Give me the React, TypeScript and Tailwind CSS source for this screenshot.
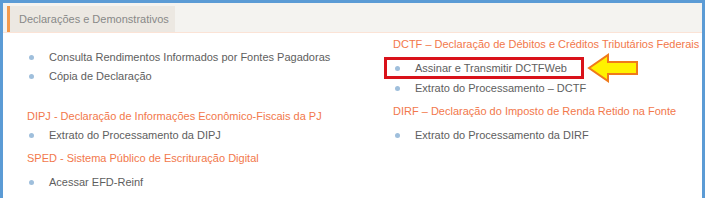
import React from "react";

const Bullet = () => (
  <span className="inline-block w-[5px] h-[5px] rounded-full bg-[#9fbfdc] mr-[15px] ml-[2px]" />
);

const Item = ({ children }: { children: React.ReactNode }) => (
  <div className="flex items-center h-[19px] text-[#5e5e5e] whitespace-nowrap">
    <Bullet />
    <span>{children}</span>
  </div>
);

const Heading = ({ children }: { children: React.ReactNode }) => (
  <div className="h-[19px] flex items-center text-[#f2784b] whitespace-nowrap">{children}</div>
);

export default function App() {
  return (
    <div
      className="w-[705px] h-[204px] bg-white overflow-hidden"
      style={{ fontFamily: '"Liberation Sans", Arial, sans-serif' }}
    >
      <div className="w-[705px] h-[198px] border-[3px] border-[#5b9bd5] border-b-0 bg-white flex flex-col overflow-hidden">
        <div className="h-[30px] bg-[#f4f3f0] border-b border-[#fbe3d6] flex items-end pl-[4px]">
          <div className="h-[26px] w-[168px] bg-[#ece8e2] border-l-[3px] border-[#f39a4c] flex items-center pl-[9px] text-[11px] text-[#888]">
            Declarações e Demonstrativos
          </div>
        </div>
        <div className="flex text-[11px] flex-1">
          <div className="w-[368px] shrink-0 pl-[24px] pt-[15px] flex flex-col">
            <Item>Consulta Rendimentos Informados por Fontes Pagadoras</Item>
            <Item>Cópia de Declaração</Item>
            <div className="h-[21px]" />
            <Heading>DIPJ - Declaração de Informações Econômico-Fiscais da PJ</Heading>
            <Item>Extrato do Processamento da DIPJ</Item>
            <div className="h-[4px]" />
            <Heading>SPED - Sistema Público de Escrituração Digital</Heading>
            <div className="h-[5px]" />
            <Item>Acessar EFD-Reinf</Item>
          </div>
          <div className="flex-1 pl-[22px] pt-[2px] flex flex-col">
            <Heading>DCTF – Declaração de Débitos e Créditos Tributários Federais</Heading>
            <div className="flex items-end h-[25px]">
              <div className="border-[3px] border-[#d9121a] w-[200px] h-[22px] flex items-center -ml-[9px] pl-[6px] shrink-0">
                <Item>Assinar e Transmitir DCTFWeb</Item>
              </div>
              <svg width="54" height="30" viewBox="0 0 54 30" className="ml-[3px] mb-[-4px] shrink-0">
                <polygon
                  points="2,15 21,2 21,9 50,9 50,21 21,21 21,28"
                  fill="#fff200"
                  stroke="#f07a1a"
                  strokeWidth="2"
                  strokeLinejoin="miter"
                />
              </svg>
            </div>
            <Item>Extrato do Processamento – DCTF</Item>
            <div className="h-[4px]" />
            <Heading>DIRF – Declaração do Imposto de Renda Retido na Fonte</Heading>
            <div className="h-[5px]" />
            <Item>Extrato do Processamento da DIRF</Item>
          </div>
        </div>
      </div>
    </div>
  );
}
